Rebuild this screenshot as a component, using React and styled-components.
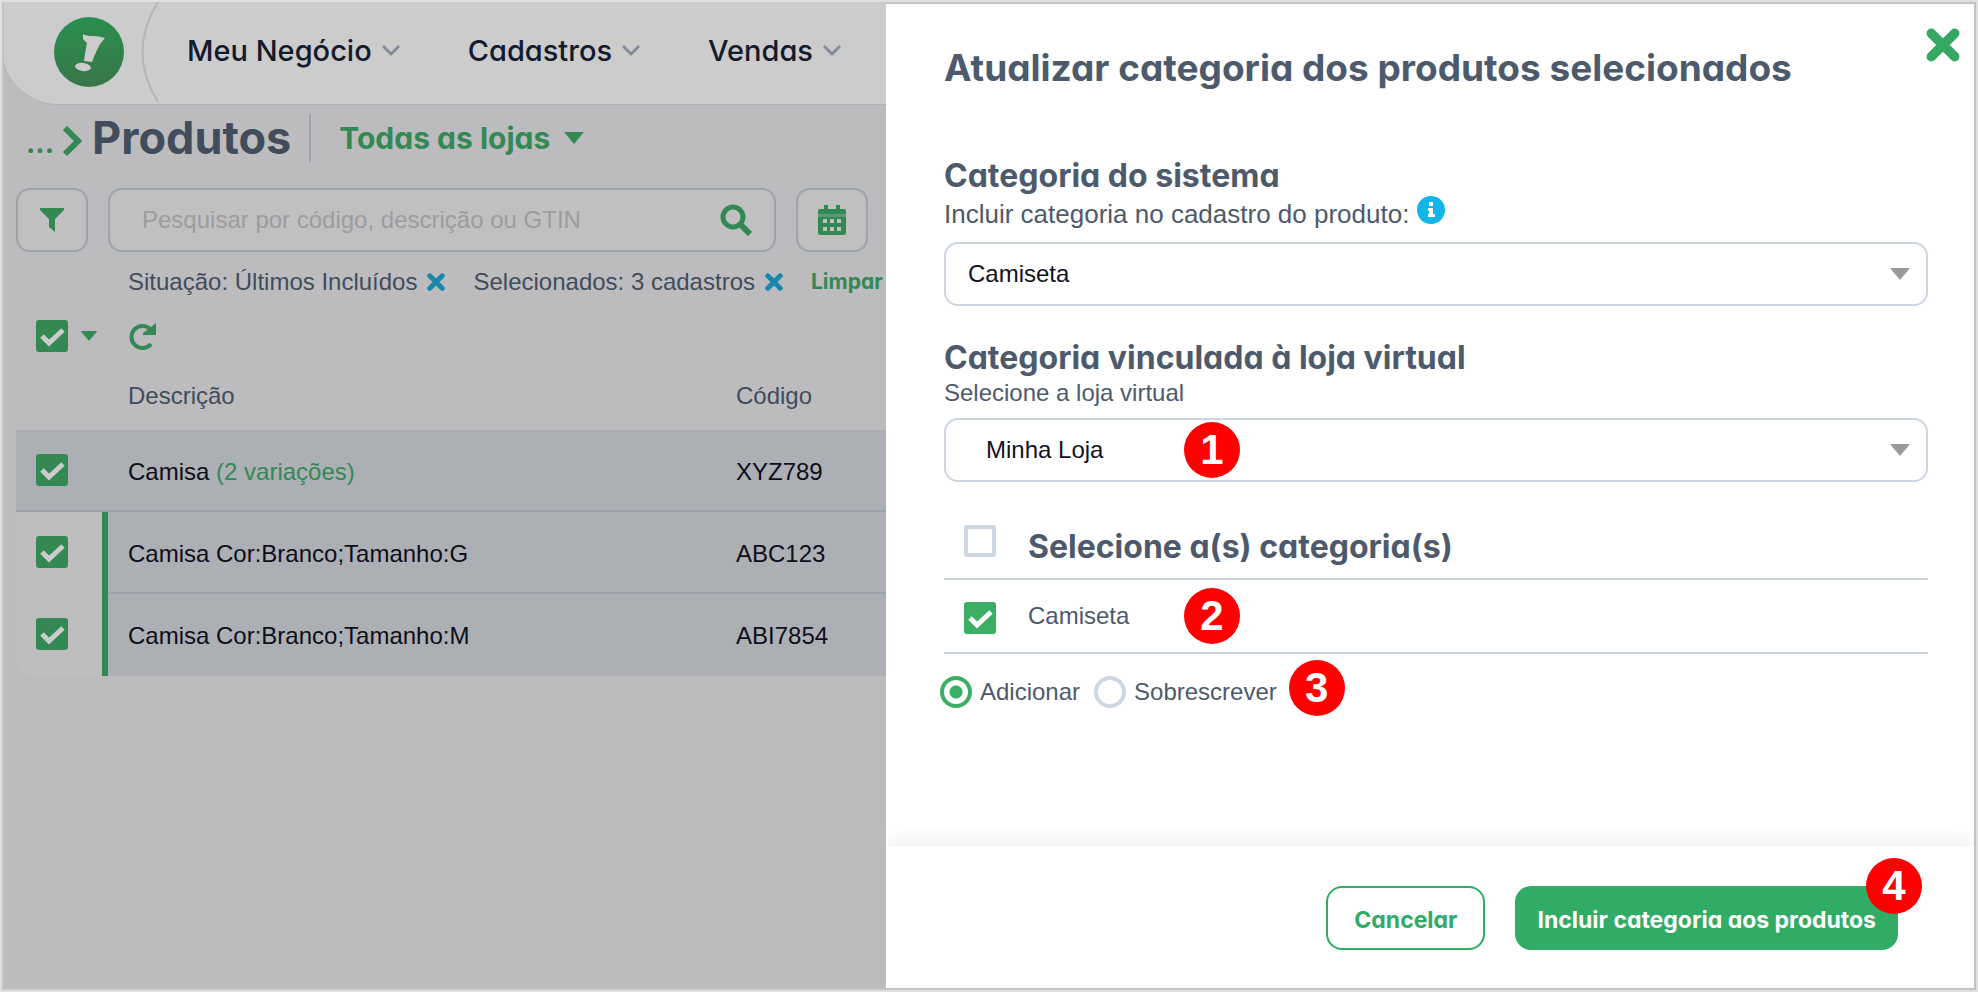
import React from "react";
import styled, { createGlobalStyle, css } from "styled-components";

const brandFont = css`
  font-family: Inter, "Liberation Sans", sans-serif;
  font-feature-settings: "cv11";
`;

const Global = createGlobalStyle`
  *, *::before, *::after { box-sizing: border-box; }
  body {
    margin: 0;
    background: #e0e0e0;
    color: #12121f;
    font: 24px/28px "Liberation Sans", Arial, sans-serif;
  }
  button, input, select { font: inherit; color: inherit; margin: 0; }
  h1, h2, p { margin: 0; }
`;

const Frame = styled.div`
  display: grid;
  grid-template-columns: 884fr 1090fr;
  min-height: 100vh;
  padding: 2px;
`;

const Page = styled.div`
  position: relative;
  min-width: 0;
  overflow: hidden;
  background: #ebecef;
`;

const Backdrop = styled.div`
  position: absolute;
  inset: 0;
  background: rgba(0, 0, 0, 0.2);
  box-shadow: inset 2px -2px #c4c4c4;
`;

const TopBar = styled.header`
  display: flex;
  align-items: center;
  height: 102px;
  padding-left: 51px;
  background: #fff;
  border-bottom-left-radius: 56px;
  box-shadow: 0 1px 1px #dcdde0;
`;

const Logo = styled.svg`
  flex: none;
  width: 72px;
  height: 72px;
`;

const Arc = styled.svg`
  flex: none;
  width: 18px;
  height: 102px;
  margin-left: 16px;
`;

const Nav = styled.nav`
  display: flex;
  gap: 68px;
  margin-left: 28px;
  padding-bottom: 4px;
`;

const NavItem = styled.button`
  ${brandFont}
  display: flex;
  align-items: center;
  gap: 10px;
  padding: 0;
  border: 0;
  background: none;
  color: #182338;
  font-size: 29px;
  line-height: 36px;
  font-weight: 500;
  white-space: nowrap;
`;

const Crumbs = styled.div`
  display: flex;
  align-items: center;
  height: 68px;
  padding-left: 24px;
  color: #41aa69;
`;

const CrumbLink = styled.a`
  ${brandFont}
  display: flex;
  align-items: flex-end;
  gap: 8px;
  padding-top: 6px;
  color: inherit;
  font-size: 28px;
  line-height: 28px;
  font-weight: 700;
  text-decoration: none;
`;

const PageTitle = styled.h1`
  ${brandFont}
  margin-left: 10px;
  color: #525f73;
  font-size: 45px;
  line-height: 52px;
  font-weight: 700;
`;

const StorePicker = styled.button`
  ${brandFont}
  display: flex;
  align-items: center;
  gap: 14px;
  height: 48px;
  margin-left: 18px;
  padding: 0 0 0 28px;
  border: 0;
  border-left: 2px solid #c3cdd8;
  background: none;
  color: inherit;
  font-size: 30px;
  font-weight: 700;
  white-space: nowrap;
`;

const SearchBar = styled.div`
  display: flex;
  gap: 20px;
  padding: 16px 18px 0 14px;
`;

const SquareButton = styled.button`
  flex: none;
  display: grid;
  place-items: center;
  width: 72px;
  height: 64px;
  padding: 0;
  border: 2px solid #c3cdd8;
  border-radius: 14px;
  background: #f0f0f1;
  color: #41aa69;
`;

const SearchField = styled.label`
  flex: 1;
  display: flex;
  align-items: center;
  height: 64px;
  padding: 0 22px 0 32px;
  border: 2px solid #c3cdd8;
  border-radius: 14px;
  background: #f1f1f1;
  color: #41aa69;

  input {
    flex: 1;
    min-width: 0;
    padding: 0;
    border: 0;
    background: none;
    outline: none;
  }
  input::placeholder {
    color: #c4c4c8;
    opacity: 1;
  }
`;

const Filters = styled.div`
  display: flex;
  gap: 28px;
  padding: 16px 0 0 126px;
  color: #525f73;
  white-space: nowrap;
`;

const Tag = styled.span`
  display: flex;
  align-items: center;
  gap: 10px;
`;

const IconButton = styled.button`
  display: flex;
  padding: 0;
  border: 0;
  background: none;
  color: ${(p) => p.$color || "#41aa69"};
`;

const ClearLink = styled.a`
  ${brandFont}
  color: #41aa69;
  font-size: 21px;
  font-weight: 700;
  text-decoration: none;
`;

const BulkBar = styled.div`
  display: flex;
  align-items: center;
  height: 32px;
  margin-top: 24px;
  padding-left: 34px;
  gap: 12px;

  button + button { margin-left: 18px; }
`;

const Check = styled.input.attrs({ type: "checkbox" })`
  appearance: none;
  flex: none;
  display: block;
  width: 32px;
  height: 32px;
  border: ${(p) => (p.defaultChecked ? "0" : "4px solid #cdd6e3")};
  border-radius: 3px;
  background: #fff;

  &:checked {
    background: ${(p) => p.$tone || "#3aae62"}
      url("data:image/svg+xml,%3Csvg xmlns='http://www.w3.org/2000/svg' viewBox='0 0 32 32'%3E%3Cpath d='M6 16l7 7L27 10' fill='none' stroke='white' stroke-width='5'/%3E%3C/svg%3E");
  }
`;

const Products = styled.table`
  width: calc(100% - 14px);
  margin: 22px 0 0 14px;
  border-spacing: 0;
  table-layout: fixed;

  th, td {
    padding: 0;
    text-align: left;
    font-weight: 400;
  }
  th {
    height: 56px;
    padding-bottom: 12px;
    color: #525f73;
  }
  td {
    height: 82px;
    background: #d8dce2;
    box-shadow: inset 0 -2px #c3cdd8;
  }
  td:first-child { padding-bottom: 2px; }
  td:not(:first-child) { padding-top: 2px; }
  tr:last-child td { box-shadow: none; }
  th:first-child, td:first-child {
    width: 86px;
    padding-left: 20px;
  }
  th:nth-child(2), td:nth-child(2) {
    width: 634px;
    padding-left: 26px;
  }
`;

const Variant = styled.tr`
  && td:first-child {
    box-shadow: none;
    background: #eeeeef;
  }
  &&:last-child { background: #d8dce2; }
  &&:last-child td:first-child { border-bottom-left-radius: 14px; }
  && td:nth-child(2) {
    padding-left: 20px;
    border-left: 6px solid #41aa69;
  }
`;

const Variations = styled.a`
  color: #41aa69;
  text-decoration: none;
`;

const Dialog = styled.section`
  position: relative;
  display: flex;
  flex-direction: column;
  min-width: 0;
  overflow: hidden;
  border: 2px solid #c2c2c2;
  border-left: 0;
  background: #fff;
  color: #4d5a6c;
`;

const Body = styled.div`
  flex: 1;
  padding: 42px 46px 40px 58px;
`;

const DialogTitle = styled.h1`
  ${brandFont}
  font-size: 37px;
  line-height: 44px;
  font-weight: 700;
`;

const CloseButton = styled(IconButton)`
  position: absolute;
  top: 24px;
  right: 14px;
`;

const Group = styled.div`
  margin-top: ${(p) => p.$gap}px;
`;

const Heading = styled.h2`
  ${brandFont}
  font-size: 32px;
  line-height: 36px;
  font-weight: 700;
`;

const FieldLabel = styled.label`
  display: flex;
  align-items: center;
  gap: 8px;
  margin-bottom: 8px;
  font-size: ${(p) => (p.$large ? 26 : 24)}px;
  line-height: ${(p) => (p.$large ? 40 : 34)}px;

  svg { margin-bottom: 8px; }
`;

const SelectBox = styled.div`
  position: relative;
  display: grid;
  align-items: center;
  color: #999;

  select {
    grid-area: 1 / 1;
    appearance: none;
    width: 100%;
    height: 64px;
    padding: 0 60px 0 ${(p) => (p.$indent ? 40 : 22)}px;
    border: 2px solid #cdd6e3;
    border-radius: 14px;
    background: #fff;
    color: #12121f;
  }
  > svg {
    grid-area: 1 / 1;
    justify-self: end;
    margin-right: 18px;
    pointer-events: none;
  }
`;

const Categories = styled.table`
  width: 100%;
  margin-top: 18px;
  border-spacing: 0;

  th, td {
    position: relative;
    padding: 0;
    border-bottom: 2px solid #cdd6e3;
    text-align: left;
  }
  th { height: 80px; }
  td { height: 74px; }
  th:first-child, td:first-child {
    width: 84px;
    padding: 4px 0 0 20px;
  }
`;

const CategoryTitle = styled.th`
  ${brandFont}
  font-size: 32px;
  font-weight: 700;

  && { padding-top: 16px; }
`;

const Modes = styled.div`
  position: relative;
  display: flex;
  gap: 14px;
  width: fit-content;
  margin: 22px 0 0 -4px;

  label {
    display: flex;
    align-items: center;
    gap: 8px;
  }
`;

const Radio = styled.input.attrs({ type: "radio", name: "modo" })`
  appearance: none;
  width: 32px;
  height: 32px;
  border: 4px solid #cdd6e3;
  border-radius: 50%;
  background: #fff;

  &:checked {
    border-color: #3aae62;
    background: radial-gradient(circle, #3aae62 6px, #fff 7px);
  }
`;

const Step = styled.span`
  position: absolute;
  top: ${(p) => p.$top};
  left: ${(p) => p.$left};
  display: grid;
  place-items: center;
  width: 56px;
  height: 56px;
  border-radius: 50%;
  background: #f00;
  color: #fff;
  font: 700 42px/56px "Liberation Sans", Arial, sans-serif;
`;

const Footer = styled.footer`
  display: flex;
  justify-content: flex-end;
  gap: 30px;
  padding: 40px 76px 38px 58px;
  box-shadow: 0 -4px 20px rgba(0, 0, 0, 0.08);
`;

const Action = styled.button`
  ${brandFont}
  position: relative;
  height: 64px;
  padding: 4px ${(p) => (p.$primary ? 20 : 26)}px 0;
  border: 2px solid #30ac66;
  border-radius: 16px;
  background: ${(p) => (p.$primary ? "#30ac66" : "#fff")};
  color: ${(p) => (p.$primary ? "#fff" : "#30ac66")};
  font-size: 23px;
  font-weight: 700;
  white-space: nowrap;
`;

const Chevron = () => (
  <svg width="18" height="12" viewBox="0 0 18 12" fill="none" aria-hidden="true">
    <path d="M1 1l8 8 8-8" stroke="#a6b0c0" strokeWidth="3" />
  </svg>
);

const Caret = ({ width = 20, height = 12 }) => (
  <svg width={width} height={height} viewBox="0 0 20 12" fill="currentColor" aria-hidden="true">
    <path d="M0 0h20L10 12z" />
  </svg>
);

const Cross = ({ size, weight }) => (
  <svg width={size} height={size} viewBox="0 0 32 32" fill="none" aria-hidden="true">
    <path d="M5 5l22 22M27 5L5 27" stroke="currentColor" strokeWidth={weight} strokeLinecap="round" />
  </svg>
);

const FunnelIcon = () => (
  <svg width="26" height="26" viewBox="0 0 26 26" fill="currentColor" aria-hidden="true">
    <path d="M1 1h24v2l-9 9v13l-6-5v-8L1 3z" />
  </svg>
);

const LensIcon = () => (
  <svg width="32" height="32" viewBox="0 0 32 32" fill="none" stroke="currentColor" aria-hidden="true">
    <circle cx="13" cy="13" r="10" strokeWidth="5" />
    <path d="M20 20l10 10" strokeWidth="6" />
  </svg>
);

const CalendarIcon = () => (
  <svg width="28" height="30" viewBox="0 0 28 30" fill="currentColor" fillRule="evenodd" aria-hidden="true">
    <path d="M6 0h4v4h8V0h4v4h4q2 0 2 2v3H0V6q0-2 2-2h4z" />
    <path d="M0 12h28v16q0 2-2 2H2q-2 0-2-2zM5 14v4h4v-4zM12 14v4h4v-4zM19 14v4h4v-4zM5 22v4h4v-4zM12 22v4h4v-4zM19 22v4h4v-4z" />
    <path d="M0 9h28v3H0z" opacity=".7" />
  </svg>
);

const ReloadIcon = () => (
  <svg width="28" height="28" viewBox="0 0 28 28" fill="none" aria-hidden="true">
    <path d="M23 22A11 11 0 1 1 22 7" stroke="currentColor" strokeWidth="4" />
    <path d="M28 1v12H15v-2z" fill="currentColor" />
  </svg>
);

const products = [
  { name: "Camisa", note: "(2 variações)", code: "XYZ789" },
  { name: "Camisa Cor:Branco;Tamanho:G", code: "ABC123", variant: true },
  { name: "Camisa Cor:Branco;Tamanho:M", code: "ABI7854", variant: true },
];

const ProductRow = ({ item }) => {
  const Row = item.variant ? Variant : "tr";
  return (
    <Row>
      <td>
        <Check defaultChecked $tone="#41aa69" aria-label={item.name} />
      </td>
      <td>
        {item.name} {item.note && <Variations href="#">{item.note}</Variations>}
      </td>
      <td>{item.code}</td>
    </Row>
  );
};

export default function App() {
  return (
    <>
      <Global />
      <Frame>
        <Page>
          <TopBar>
            <Logo viewBox="0 0 72 72" aria-label="Logo">
              <defs>
                <linearGradient id="logo" x2="0" y2="1">
                  <stop offset="0" stopColor="#35b264" />
                  <stop offset="1" stopColor="#46955a" />
                </linearGradient>
              </defs>
              <circle cx="36" cy="35" r="35" fill="url(#logo)" />
              <path d="M30 17q3 2 10 2 6 0 12 2-5 5-8 12-3 6-5 12l-8-1q1-9 3-18l-4-4z" fill="#fff" />
              <ellipse cx="30" cy="50" rx="8" ry="4" fill="#fff" transform="rotate(8 30 50)" />
            </Logo>
            <Arc viewBox="0 0 18 102" fill="none" aria-hidden="true">
              <path d="M17 0Q-14 50 17 100" stroke="#dfe3ea" strokeWidth="2" />
            </Arc>
            <Nav>
              {["Meu Negócio", "Cadastros", "Vendas"].map((item) => (
                <NavItem key={item}>
                  {item}
                  <Chevron />
                </NavItem>
              ))}
            </Nav>
          </TopBar>
          <Crumbs>
            <CrumbLink href="#" aria-label="Voltar">
              ...
              <svg width="20" height="32" viewBox="0 0 20 32" fill="none" aria-hidden="true">
                <path d="M3 3l13 13L3 29" stroke="currentColor" strokeWidth="6" />
              </svg>
            </CrumbLink>
            <PageTitle>Produtos</PageTitle>
            <StorePicker>
              Todas as lojas
              <Caret />
            </StorePicker>
          </Crumbs>
          <SearchBar>
            <SquareButton aria-label="Filtrar">
              <FunnelIcon />
            </SquareButton>
            <SearchField>
              <input aria-label="Pesquisar" placeholder="Pesquisar por código, descrição ou GTIN" />
              <LensIcon />
            </SearchField>
            <SquareButton aria-label="Período">
              <CalendarIcon />
            </SquareButton>
          </SearchBar>
          <Filters>
            <Tag>
              Situação: Últimos Incluídos
              <IconButton $color="#20a8da" aria-label="Remover situação">
                <Cross size={18} weight={9} />
              </IconButton>
            </Tag>
            <Tag>
              Selecionados: 3 cadastros
              <IconButton $color="#20a8da" aria-label="Remover selecionados">
                <Cross size={18} weight={9} />
              </IconButton>
            </Tag>
            <ClearLink href="#">Limpar</ClearLink>
          </Filters>
          <BulkBar>
            <Check defaultChecked $tone="#41aa69" aria-label="Selecionar todos" />
            <IconButton aria-label="Opções de seleção">
              <Caret width={18} height={10} />
            </IconButton>
            <IconButton aria-label="Atualizar">
              <ReloadIcon />
            </IconButton>
          </BulkBar>
          <Products>
            <thead>
              <tr>
                <th aria-label="Seleção" />
                <th>Descrição</th>
                <th>Código</th>
              </tr>
            </thead>
            <tbody>
              {products.map((item) => (
                <ProductRow key={item.code} item={item} />
              ))}
            </tbody>
          </Products>
          <Backdrop />
        </Page>

        <Dialog role="dialog" aria-labelledby="dialog-title">
          <CloseButton $color="#35a862" aria-label="Fechar">
            <Cross size={34} weight={9} />
          </CloseButton>
          <Body>
            <DialogTitle id="dialog-title">Atualizar categoria dos produtos selecionados</DialogTitle>
            <Group $gap={68}>
              <Heading>Categoria do sistema</Heading>
              <FieldLabel htmlFor="system-category" $large>
                Incluir categoria no cadastro do produto:
                <svg width="28" height="28" viewBox="0 0 28 28" aria-hidden="true">
                  <circle cx="14" cy="14" r="14" fill="#12b4ea" />
                  <path d="M12 6h4v4h-4zM11 12h5v6h2v3h-7v-3h1v-3h-1z" fill="#fff" />
                </svg>
              </FieldLabel>
              <SelectBox>
                <select id="system-category">
                  <option>Camiseta</option>
                </select>
                <Caret />
              </SelectBox>
            </Group>
            <Group $gap={34}>
              <Heading>Categoria vinculada à loja virtual</Heading>
              <FieldLabel htmlFor="store">Selecione a loja virtual</FieldLabel>
              <SelectBox $indent>
                <select id="store">
                  <option>Minha Loja</option>
                </select>
                <Caret />
                <Step $top="4px" $left="240px">1</Step>
              </SelectBox>
            </Group>
            <Categories>
              <thead>
                <tr>
                  <th>
                    <Check id="all-categories" />
                  </th>
                  <CategoryTitle>
                    <label htmlFor="all-categories">Selecione a(s) categoria(s)</label>
                  </CategoryTitle>
                </tr>
              </thead>
              <tbody>
                <tr>
                  <td>
                    <Check id="category" defaultChecked />
                  </td>
                  <td>
                    <label htmlFor="category">Camiseta</label>
                    <Step $top="8px" $left="156px">2</Step>
                  </td>
                </tr>
              </tbody>
            </Categories>
            <Modes>
              <label>
                <Radio defaultChecked />
                Adicionar
              </label>
              <label>
                <Radio />
                Sobrescrever
              </label>
              <Step $top="-16px" $left="calc(100% + 12px)">3</Step>
            </Modes>
          </Body>
          <Footer>
            <Action>Cancelar</Action>
            <Action $primary>
              Incluir categoria aos produtos
              <Step $top="-30px" $left="calc(100% - 30px)">4</Step>
            </Action>
          </Footer>
        </Dialog>
      </Frame>
    </>
  );
}
